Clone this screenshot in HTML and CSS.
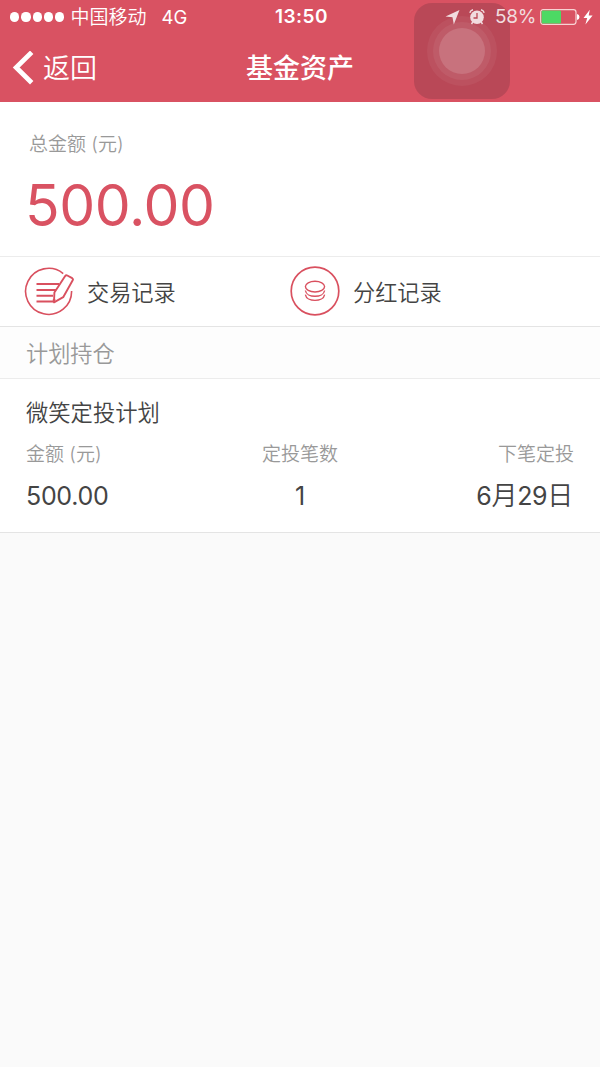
FILE: index.html
```html
<!DOCTYPE html>
<html lang="zh-CN">
<head>
    <meta charset="UTF-8">
    <meta name="viewport" content="width=device-width, initial-scale=1.0">
    <title>基金资产</title>
    <link rel="stylesheet" href="styles.css">
</head>
<body>
    <header class="header">
        <div class="status-bar">
            <div class="status-left">
                <div class="signal"><i></i><i></i><i></i><i></i><i></i></div>
                <span class="carrier">中国移动</span>
                <span class="network">4G</span>
            </div>
            <div class="clock">13:50</div>
            <div class="status-right">
                <svg class="location" width="16" height="16" viewBox="0 0 16 16"><path d="M15.500 1L9.800 15.500L8.500 8.300L1.500 7.400Z" fill="currentColor"/></svg>
                <svg class="alarm" width="16" height="16" viewBox="0 0 16 16">
                    <circle cx="8" cy="8.300" r="6.800" fill="currentColor"/>
                    <path d="M.8 3.800Q1.500 1.300 4 .8M12 .8Q14.500 1.300 15.200 3.800M3.800 13L2.500 15M12.200 13L13.500 15" fill="none" stroke="currentColor" stroke-width="1.400"/>
                    <path d="M8 4V9H4.500" fill="none" stroke="#ba4754" stroke-width="1.300"/>
                </svg>
                <span class="percent">58%</span>
                <svg class="battery" width="40" height="16" viewBox="0 0 40 16">
                    <rect x=".7" y=".7" width="35.300" height="14.600" rx="2.500" fill="none" stroke="#f8d3d4" stroke-width="1.200"/>
                    <rect x="1.600" y="1.600" width="19.400" height="12.800" rx="1" fill="#4cd964"/>
                    <path d="M37 5Q39.500 5.500 39.500 8T37 11Z" fill="#fff"/>
                </svg>
                <svg class="bolt" width="10" height="16" viewBox="0 0 10 16"><path d="M6.800 .8L.5 9H4.200L2.400 15.500L9.600 6.600H5.700Z" fill="#fff"/></svg>
            </div>
        </div>
        <div class="nav-bar">
            <a class="back">
                <svg width="22" height="34" viewBox="0 0 22 34"><path d="M19.700 1.300L4.200 16.500L19.700 31.700" fill="none" stroke="#fff" stroke-width="4.800"/></svg>
                <span>返回</span>
            </a>
            <h1 class="title">基金资产</h1>
        </div>
        <div class="assistive"><div class="ring"><div class="ring-inner"><div class="dot"></div></div></div></div>
    </header>

    <main>
        <section class="total">
            <div class="total-label">总金额 (元)</div>
            <div class="total-value">500.00</div>
        </section>

        <nav class="records">
            <a class="record">
                <svg width="50" height="50" viewBox="0 0 50 50" fill="none" stroke="#d9505f">
                    <path d="M39.200 7.600A23 23 0 1 0 47.600 25" stroke-width="1.600"/>
                    <path d="M12.500 18H35M12.500 23.900H32M12.500 29.700H29M12.500 35.500H29" stroke-width="2"/>
                    <path d="M43.300 9.500L48.200 12.200Q49.400 13 48.700 14.200L39.200 31.200L30 36.300L30.400 26.500L41 10.300Q42 8.800 43.300 9.500Z" fill="#fff" stroke-width="1.900" stroke-linejoin="round"/>
                    <path d="M30 36.300L30.100 33" stroke-width="2.500"/>
                </svg>
                <span>交易记录</span>
            </a>
            <a class="record">
                <svg width="50" height="50" viewBox="0 0 50 50" fill="none" stroke="#d9505f">
                    <circle cx="25" cy="25" r="23.800" stroke-width="1.700"/>
                    <g stroke-width="1.400">
                        <ellipse cx="25" cy="20.600" rx="9.600" ry="5.400"/>
                        <path d="M15.400 24.500C16.500 32.200 33.500 32.200 34.600 24.500M15.400 28.600C16.500 36.300 33.500 36.300 34.600 28.600"/>
                    </g>
                </svg>
                <span>分红记录</span>
            </a>
        </nav>

        <h2 class="section-title">计划持仓</h2>

        <section class="plan">
            <h3 class="plan-name">微笑定投计划</h3>
            <div class="plan-row">
                <div class="cell">
                    <div class="label">金额 (元)</div>
                    <div class="value">500.00</div>
                </div>
                <div class="cell center">
                    <div class="label">定投笔数</div>
                    <div class="value">1</div>
                </div>
                <div class="cell right">
                    <div class="label">下笔定投</div>
                    <div class="value date">6<span>月</span>29<span>日</span></div>
                </div>
            </div>
        </section>
    </main>
</body>
</html>
```

FILE: styles.css
```css
* {
    box-sizing: border-box;
}

body {
    margin: 0;
    min-height: 100vh;
    background: #fafafa;
    font-family: Inter, "Noto Sans CJK SC", sans-serif;
    font-weight: 350;
    color: #444;
}

h1, h2, h3 {
    margin: 0;
    font-weight: 350;
}

svg {
    display: block;
    flex: none;
}

.header {
    position: relative;
    height: 102px;
    background: #d95262;
    color: #fff;
}

.status-bar {
    position: relative;
    z-index: 1;
    display: grid;
    grid-template-columns: 1fr auto 1fr;
    align-items: center;
    height: 33px;
    padding: 0 7px 0 10px;
    font-size: 19px;
    line-height: 32px;
}

.status-left, .status-right {
    display: flex;
    align-items: center;
}

.signal {
    display: flex;
    gap: 2px;
}

.signal i {
    width: 9.3px;
    height: 9.3px;
    border-radius: 50%;
    background: #fff;
}

.carrier {
    margin-left: 6px;
    padding-top: 2px;
}

.network {
    margin-left: 15px;
    font-size: 18.5px;
    font-weight: 400;
}

.clock {
    font-weight: 600;
    font-size: 19px;
    letter-spacing: 0.5px;
}

.status-right {
    justify-content: flex-end;
    color: #f1dcdf;
}

.alarm {
    margin-left: 9px;
}

.percent {
    margin-left: 10px;
    font-size: 19px;
    font-weight: 400;
    letter-spacing: -0.3px;
}

.battery {
    margin-left: 4px;
}

.bolt {
    margin-left: 3px;
}

.nav-bar {
    display: grid;
    grid-template-columns: 1fr auto 1fr;
    align-items: center;
    height: 69px;
    padding: 0 12px;
}

.back {
    display: flex;
    align-items: center;
    gap: 9px;
    font-size: 27px;
    line-height: 40px;
}

.back span {
    padding-top: 2px;
}

.title {
    padding-top: 2px;
    font-size: 27px;
    font-weight: 500;
    line-height: 40px;
}

/* floating AssistiveTouch button */
.assistive {
    position: absolute;
    left: 414px;
    top: 3px;
    display: grid;
    place-items: center;
    width: 96px;
    height: 96px;
    border-radius: 18px;
    background: rgba(80, 40, 50, 0.23);
}

.ring, .ring-inner, .dot {
    display: grid;
    place-items: center;
    border-radius: 50%;
}

.ring {
    width: 70px;
    height: 70px;
    background: rgba(255, 255, 255, 0.05);
}

.ring-inner {
    width: 58px;
    height: 58px;
    background: rgba(255, 255, 255, 0.06);
}

.dot {
    width: 46px;
    height: 46px;
    background: rgba(255, 255, 255, 0.14);
}

.total {
    height: 155px;
    padding: 27px 26px 0;
    background: #fff;
    border-bottom: 1px solid #ececec;
}

.total-label {
    padding-left: 3px;
    font-size: 19px;
    line-height: 31px;
    color: #999;
}

.total-value {
    margin: 10px 0 0 -1px;
    font-size: 57px;
    line-height: 72px;
    letter-spacing: -0.4px;
    color: #d95262;
}

.total-value, .value {
    font-weight: 400;
}

.records {
    display: flex;
    height: 70px;
    padding: 0 0 1px 24px;
    background: #fff;
    border-bottom: 1px solid #e4e4e4;
}

.record {
    display: flex;
    align-items: center;
    gap: 13px;
    width: 266px;
    font-size: 22.2px;
}

.record svg {
    margin-bottom: 1px;
}

.record span {
    padding-bottom: 1px;
}

.section-title {
    height: 52px;
    padding-left: 26px;
    background: #fdfdfd;
    border-bottom: 1px solid #ececec;
    font-size: 22.2px;
    line-height: 53px;
    color: #999;
}

.plan {
    height: 154px;
    padding: 17px 26px 0;
    background: #fff;
    border-bottom: 1px solid #e4e4e4;
}

.plan-name {
    font-size: 22.3px;
    line-height: 34px;
}

.plan-row {
    display: grid;
    grid-template-columns: 1fr 1fr 1fr;
    margin-top: 9px;
}

.label {
    font-size: 19px;
    line-height: 32px;
    color: #999;
}

.value {
    margin-top: 5px;
    font-size: 25px;
    line-height: 40px;
    letter-spacing: -0.3px;
}

.date {
    padding-right: 1px;
}

.date span {
    font-size: 26px;
    font-weight: 350;
}

.center {
    text-align: center;
}

.right {
    text-align: right;
}
```
